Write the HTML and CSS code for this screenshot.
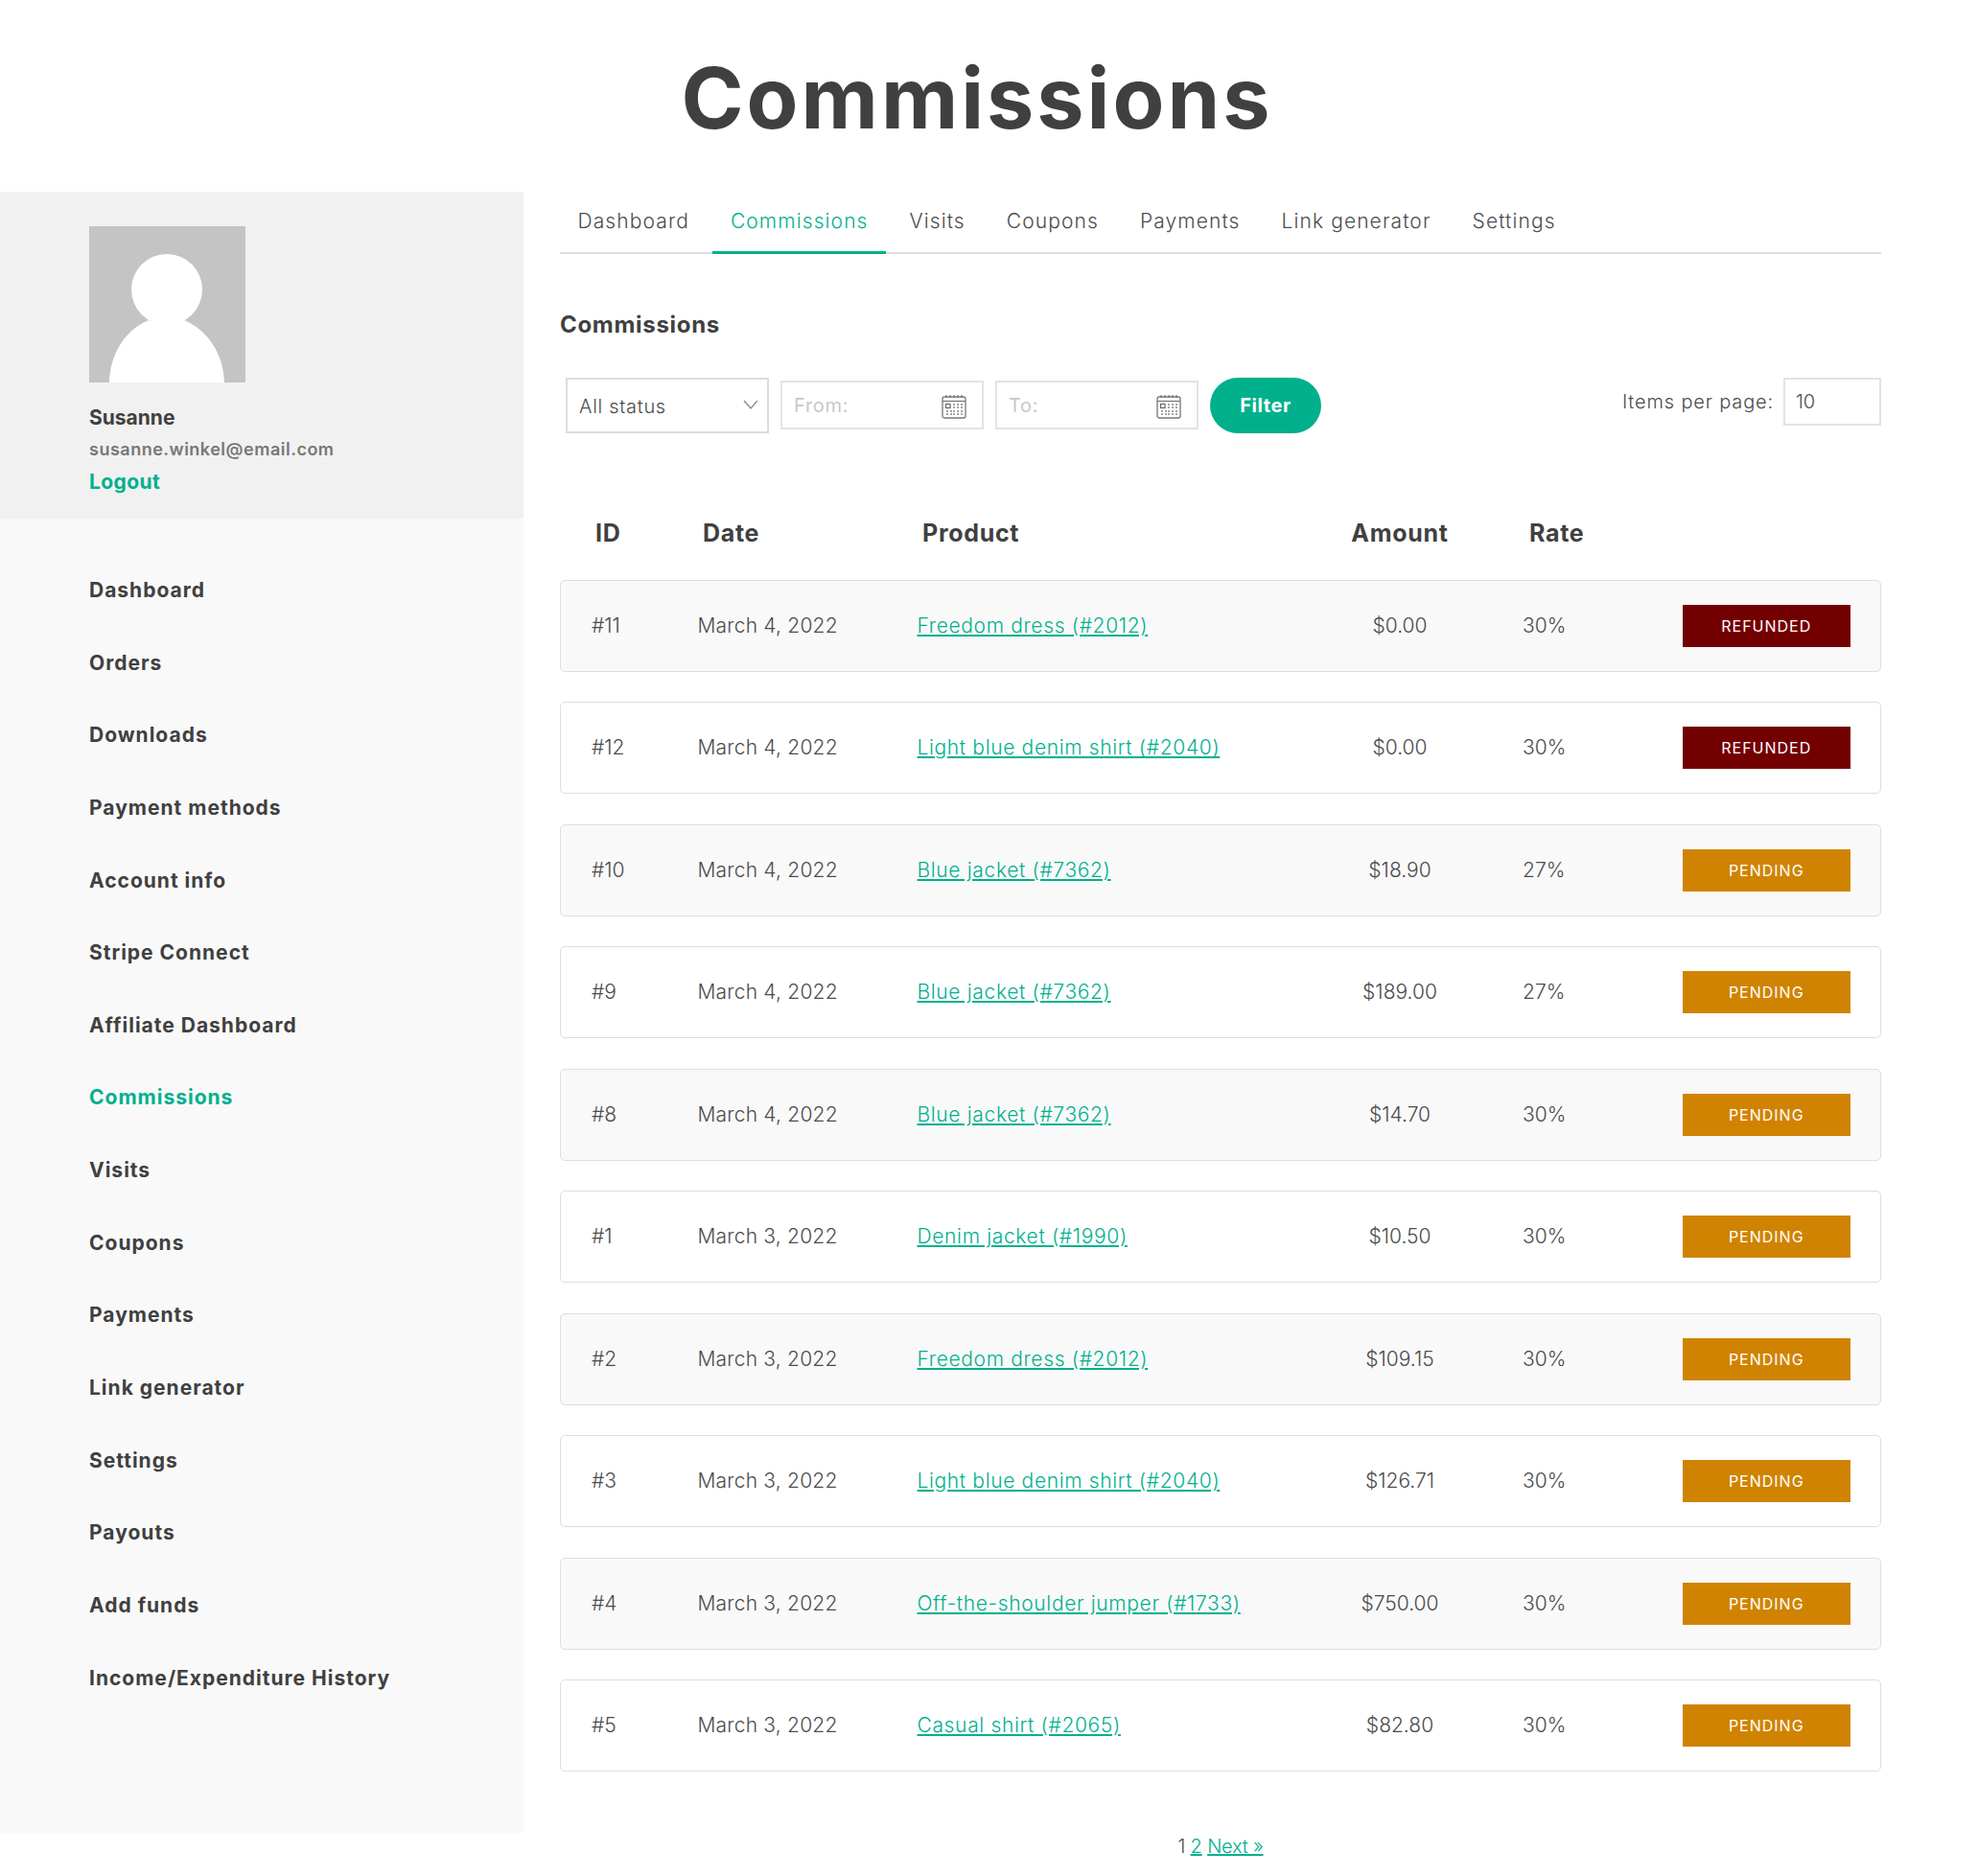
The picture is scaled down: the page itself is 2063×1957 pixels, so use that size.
FILE: index.html
```html
<!DOCTYPE html>
<html lang="en">
<head>
<meta charset="utf-8">
<title>Commissions</title>
<link rel="stylesheet" href="styles.css">
</head>
<body>
<header class="page-head"><h1 class="page-title">Commissions</h1></header>
<div class="layout">
  <aside class="sidebar">
    <section class="profile">
      <svg class="avatar" viewBox="0 0 163 163" aria-hidden="true">
        <rect width="163" height="163" fill="#c4c4c4"/>
        <circle cx="81" cy="66" r="37" fill="#fff"/>
        <path d="M21 163C22 132 38 108 62 98Q81 106 99 98C123 108 140 132 141 163Z" fill="#fff"/>
      </svg>
      <div class="user-name">Susanne</div>
      <div class="user-mail">susanne.winkel@email.com</div>
      <a class="logout" href="#">Logout</a>
    </section>
    <nav class="side-nav">
      <a href="#">Dashboard</a>
      <a href="#">Orders</a>
      <a href="#">Downloads</a>
      <a href="#">Payment methods</a>
      <a href="#">Account info</a>
      <a href="#">Stripe Connect</a>
      <a href="#">Affiliate Dashboard</a>
      <a class="active" href="#">Commissions</a>
      <a href="#">Visits</a>
      <a href="#">Coupons</a>
      <a href="#">Payments</a>
      <a href="#">Link generator</a>
      <a href="#">Settings</a>
      <a href="#">Payouts</a>
      <a href="#">Add funds</a>
      <a href="#">Income/Expenditure History</a>
    </nav>
  </aside>
  <main class="content">
    <nav class="tabs">
      <a href="#">Dashboard</a>
      <a class="active" href="#">Commissions</a>
      <a href="#">Visits</a>
      <a href="#">Coupons</a>
      <a href="#">Payments</a>
      <a href="#">Link generator</a>
      <a href="#">Settings</a>
    </nav>
    <h2 class="section-title">Commissions</h2>
    <form class="filters">
      <div class="select-box">
        <span>All status</span>
        <svg class="chevron" viewBox="0 0 16 10" aria-hidden="true"><path d="M1 1l7 8 7-8" fill="none" stroke="#888" stroke-width="1.2"/></svg>
      </div>
      <div class="date-box">
        <input class="date-input" placeholder="From:">
        <svg class="cal" viewBox="0 0 26 26" aria-hidden="true">
          <rect x="1" y="3" width="24" height="22" rx="2" fill="#fff" stroke="#777" stroke-width="1.3"/>
          <path d="M1 7.5h24" stroke="#777" stroke-width="1.3"/>
          <path d="M5 1v3M9 1v3M13 1v3M17 1v3M21 1v3" stroke="#777" stroke-width="1.2"/>
          <rect x="4.5" y="10.500" width="4.500" height="4" fill="none" stroke="#666" stroke-width="1.200"/>
          <path d="M12 11h2M16 11h2M20 11h2M12 14h2M16 14h2M20 14h2M5 18h2M9 18h2M12 18h2M16 18h2M20 18h2M5 21h2M9 21h2M12 21h2M16 21h2M20 21h2" stroke="#888" stroke-width="1.300"/>
        </svg>
      </div>
      <div class="date-box">
        <input class="date-input" placeholder="To:">
        <svg class="cal" viewBox="0 0 26 26" aria-hidden="true">
          <rect x="1" y="3" width="24" height="22" rx="2" fill="#fff" stroke="#777" stroke-width="1.3"/>
          <path d="M1 7.5h24" stroke="#777" stroke-width="1.3"/>
          <path d="M5 1v3M9 1v3M13 1v3M17 1v3M21 1v3" stroke="#777" stroke-width="1.2"/>
          <rect x="4.5" y="10.500" width="4.500" height="4" fill="none" stroke="#666" stroke-width="1.200"/>
          <path d="M12 11h2M16 11h2M20 11h2M12 14h2M16 14h2M20 14h2M5 18h2M9 18h2M12 18h2M16 18h2M20 18h2M5 21h2M9 21h2M12 21h2M16 21h2M20 21h2" stroke="#888" stroke-width="1.300"/>
        </svg>
      </div>
      <button class="filter-btn" type="button">Filter</button>
      <label class="per-page">Items per page:<input class="per-input" value="10"></label>
    </form>

    <div class="t-head">
      <span>ID</span><span>Date</span><span>Product</span><span class="c-amount">Amount</span><span>Rate</span>
    </div>
    <div class="rows">
      <div class="row"><span>#11</span><span class="c-date">March 4, 2022</span><a href="#">Freedom dress (#2012)</a><span class="c-amount">$0.00</span><span>30%</span><span class="badge refunded">REFUNDED</span></div>
      <div class="row"><span>#12</span><span class="c-date">March 4, 2022</span><a href="#">Light blue denim shirt (#2040)</a><span class="c-amount">$0.00</span><span>30%</span><span class="badge refunded">REFUNDED</span></div>
      <div class="row"><span>#10</span><span class="c-date">March 4, 2022</span><a href="#">Blue jacket (#7362)</a><span class="c-amount">$18.90</span><span>27%</span><span class="badge pending">PENDING</span></div>
      <div class="row"><span>#9</span><span class="c-date">March 4, 2022</span><a href="#">Blue jacket (#7362)</a><span class="c-amount">$189.00</span><span>27%</span><span class="badge pending">PENDING</span></div>
      <div class="row"><span>#8</span><span class="c-date">March 4, 2022</span><a href="#">Blue jacket (#7362)</a><span class="c-amount">$14.70</span><span>30%</span><span class="badge pending">PENDING</span></div>
      <div class="row"><span>#1</span><span class="c-date">March 3, 2022</span><a href="#">Denim jacket (#1990)</a><span class="c-amount">$10.50</span><span>30%</span><span class="badge pending">PENDING</span></div>
      <div class="row"><span>#2</span><span class="c-date">March 3, 2022</span><a href="#">Freedom dress (#2012)</a><span class="c-amount">$109.15</span><span>30%</span><span class="badge pending">PENDING</span></div>
      <div class="row"><span>#3</span><span class="c-date">March 3, 2022</span><a href="#">Light blue denim shirt (#2040)</a><span class="c-amount">$126.71</span><span>30%</span><span class="badge pending">PENDING</span></div>
      <div class="row"><span>#4</span><span class="c-date">March 3, 2022</span><a href="#">Off-the-shoulder jumper (#1733)</a><span class="c-amount">$750.00</span><span>30%</span><span class="badge pending">PENDING</span></div>
      <div class="row"><span>#5</span><span class="c-date">March 3, 2022</span><a href="#">Casual shirt (#2065)</a><span class="c-amount">$82.80</span><span>30%</span><span class="badge pending">PENDING</span></div>
    </div>
    <div class="pager">1 <a href="#">2</a> <a href="#">Next »</a></div>
  </main>
</div>
</body>
</html>
```
FILE: styles.css
```css
* { box-sizing: border-box; }
html, body { margin: 0; padding: 0; background: #fff; }
body {
  width: 2063px;
  height: 1957px;
  overflow: hidden;
  font-family: Inter, "Liberation Sans", sans-serif;
  font-weight: 300;
  color: #4c4c4c;
  font-size: 21px;
}
a { color: #00b08d; }

.page-head { height: 200px; padding-right: 25px; display: flex; justify-content: center; align-items: flex-start; }
.page-title {
  margin: 0;
  padding-top: 47px;
  font-size: 88px;
  line-height: 110px;
  font-weight: 700;
  color: #404040;
  letter-spacing: 3px;
}

.layout { display: flex; align-items: flex-start; }

.sidebar { width: 546px; height: 1712px; background: #f9f9f9; flex: none; }
.profile { height: 341px; background: #f1f1f1; padding: 36px 0 0 93px; }
.avatar { display: block; width: 163px; height: 163px; margin-bottom: 20px; }
.user-name { font-weight: 700; font-size: 21px; line-height: 33px; color: #404040; }
.user-mail { font-weight: 600; font-size: 18px; line-height: 34px; letter-spacing: 0.5px; color: #777; }
.logout { display: block; font-weight: 700; font-size: 21px; line-height: 34px; letter-spacing: 0.4px; color: #00b08d; text-decoration: none; }

.side-nav { display: flex; flex-direction: column; padding: 37px 0 0 93px; }
.side-nav a {
  height: 75.65px;
  line-height: 75.65px;
  font-weight: 700;
  font-size: 21px;
  letter-spacing: 1px;
  color: #404040;
  text-decoration: none;
}
.side-nav a.active { color: #00b08d; }

.content { width: 1378px; margin-left: 38px; flex: none; }

.tabs { display: flex; height: 65px; gap: 6px; border-bottom: 2px solid #ddd; }
.tabs a {
  height: 65px;
  padding: 14px 18.5px 0;
  line-height: 34px;
  font-size: 21px;
  letter-spacing: 1.1px;
  color: #4c4c4c;
  text-decoration: none;
}
.tabs a.active { color: #00b08d; border-bottom: 3px solid #00b08d; }

.section-title {
  margin: 57px 0 0;
  font-size: 24px;
  line-height: 34px;
  font-weight: 700;
  letter-spacing: 0.7px;
  color: #404040;
}

.filters { display: flex; align-items: flex-start; margin-top: 38px; padding-left: 6px; height: 58px; }
.select-box {
  width: 212px;
  height: 58px;
  border: 2px solid #ddd;
  display: flex;
  align-items: center;
  justify-content: space-between;
  padding: 0 9px 0 12px;
  font-size: 20px;
  letter-spacing: 0.7px;
  background: #fff;
}
.select-box span { padding-top: 2px; }
.chevron { width: 16px; height: 10px; margin-bottom: 2px; }
.date-box {
  width: 212px;
  height: 51px;
  margin: 3px 0 0 12px;
  border: 2px solid #e3e3e3;
  display: flex;
  align-items: center;
  padding: 0 16px 0 12px;
  background: #fff;
}
.date-input {
  flex: 1;
  min-width: 0;
  border: 0;
  outline: 0;
  padding: 0;
  font: 400 20px Inter, "Liberation Sans", sans-serif;
  letter-spacing: 0.7px;
  background: transparent;
}
.date-input::placeholder { color: #c8c8c8; opacity: 1; }
.cal { width: 26px; height: 26px; flex: none; margin-top: 2px; }
.filter-btn {
  width: 116px;
  height: 58px;
  margin-left: 12px;
  border: 0;
  border-radius: 29px;
  background: #00b08d;
  color: #fff;
  font: 700 20px Inter, "Liberation Sans", sans-serif;
  letter-spacing: 0.6px;
  padding: 0;
}
.per-page { margin-left: auto; display: flex; align-items: flex-start; font-size: 20px; line-height: 50px; letter-spacing: 0.85px; color: #4c4c4c; }
.per-input {
  width: 102px;
  height: 50px;
  margin-left: 10px;
  border: 2px solid #e3e3e3;
  outline: 0;
  padding: 0 11px;
  font: 300 20px Inter, "Liberation Sans", sans-serif;
  color: #4c4c4c;
  background: #fff;
}

.t-head {
  display: grid;
  grid-template-columns: 112px 229px 363px 270px 1fr;
  margin-top: 83px;
  padding-left: 37px;
  height: 42px;
  line-height: 42px;
  font-size: 25px;
  font-weight: 700;
  letter-spacing: 0.7px;
  color: #404040;
}
.c-amount { text-align: center; }

.rows { display: flex; flex-direction: column; gap: 31.45px; margin-top: 28px; }
.row {
  display: grid;
  grid-template-columns: 110.5px 229px 375.500px 256px 166.500px 175.500px;
  align-items: center;
  height: 96px;
  padding: 0 0 1px 32px;
  border: 1.5px solid #dedede;
  border-radius: 5px;
  font-size: 21px;
  color: #4c4c4c;
  background: #fff;
}
.row:nth-child(odd) { background: #f9f9f9; }
.row a { color: #00b08d; letter-spacing: 0.65px; }
.c-date { letter-spacing: 0.2px; }
.badge {
  height: 44px;
  margin-top: 1px;
  line-height: 44px;
  text-align: center;
  font-size: 16px;
  font-weight: 400;
  letter-spacing: 1px;
  color: #fff;
}
.refunded { background: #730000; }
.pending { background: #d08300; }

.pager { margin-top: 63px; text-align: center; font-size: 20px; line-height: 30px; letter-spacing: -0.2px; }
```
